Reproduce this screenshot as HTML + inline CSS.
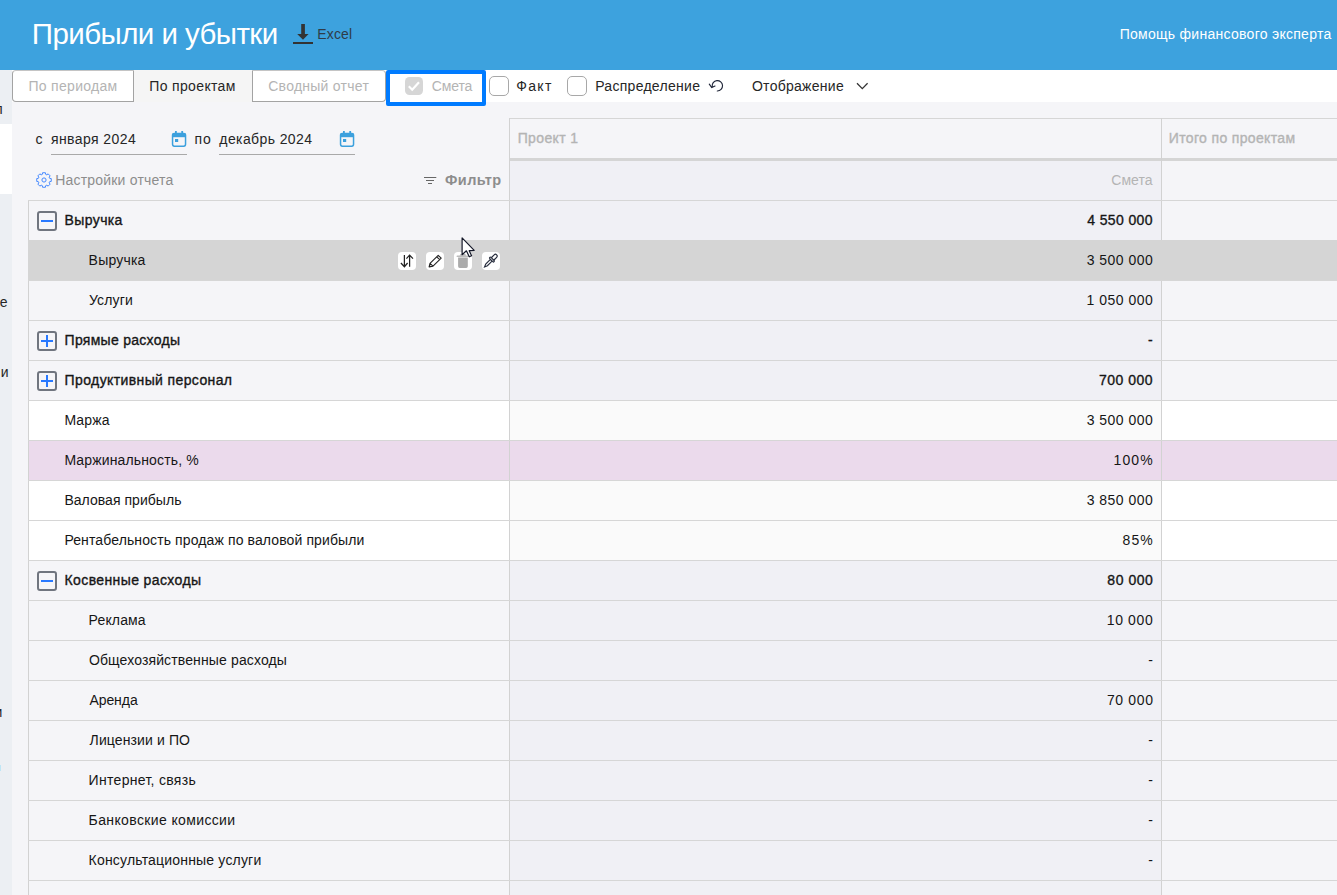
<!DOCTYPE html>
<html lang="ru">
<head>
<meta charset="utf-8">
<title>Прибыли и убытки</title>
<style>
*{box-sizing:border-box;margin:0;padding:0}
html,body{width:1337px;height:895px;overflow:hidden;background:#f5f5f8;font-family:"Liberation Sans",sans-serif;color:#161616;font-size:14px}
.abs,.tx,.row{position:absolute}
.tx{font-size:14px;line-height:18px;white-space:nowrap}
#hdr{left:0;top:0;width:1337px;height:70px;background:#3da2de}
#side{left:0;top:70px;width:12px;height:825px;background:#eceff3}
#sidew{left:0;top:124px;width:12px;height:70px;background:#fff}
.sf{position:absolute;font-size:14px;line-height:18px;color:#262626;white-space:nowrap}
#bar{left:12px;top:70px;width:1325px;height:32px;background:#fff}
.tab{top:70px;height:32px;background:#fff;border:1px solid #a3a3a3;border-top-color:#c4c4c4}
.cb{width:20px;height:20px;border:1px solid #a8a8a8;border-radius:5px;background:#fff}
.vline{width:1px;background:#d2d2d2}
.hline{height:1px;background:#d6d6d6}
.row{left:28px;width:1309px;height:40px}
.row .l{position:absolute;left:0;top:0;width:481px;height:40px;border-left:1px solid #d2d2d2}
.row .p{position:absolute;left:482px;top:0;width:651px;height:40px;background:#f0f0f5}
.row .t{position:absolute;left:1134px;top:0;width:175px;height:40px}
.row .v1{position:absolute;left:481px;top:0;width:1px;height:40px;background:#d2d2d2}
.row .v2{position:absolute;left:1133px;top:0;width:1px;height:40px;background:#d2d2d2}
.row .b{position:absolute;left:0;top:0;width:1309px;height:1px;background:#d6d6d6}
.row.s .l,.row.s .t{background:#fff}
.row.s .p{background:#fafafa}
.row.pk .l,.row.pk .t,.row.pk .p{background:#ebdaec}
.row.hv .l,.row.hv .t,.row.hv .p{background:#d5d5d5}
.row.hv .l{border-left-color:#d5d5d5}
.row.hv .v1,.row.hv .v2,.row.hv .b{background:#d5d5d5}
.box{position:absolute;left:9px;top:11px;width:20px;height:20px;border:2px solid #70757f;border-radius:3px;background:#f5f5f8}
.box i{position:absolute;left:2px;top:7px;width:12px;height:2px;background:#2979ff}
.box b{position:absolute;left:7px;top:2px;width:2px;height:12px;background:#2979ff}
.ic{position:absolute;top:252px;width:18px;height:18px;border-radius:4px;background:#fff}
</style>
</head>
<body>
<div id="hdr" class="abs"></div>
<svg class="abs" style="left:292px;top:23px" width="22" height="22" viewBox="0 0 22 22"><path d="M9.200 1h3.700v10h3.700L11 16.800 5.200 11h4z" fill="#333"/><rect x="1" y="19" width="20" height="2" fill="#333"/></svg>

<div id="side" class="abs"></div>
<div id="sidew" class="abs"></div>
<div class="abs" style="left:0;top:70px;width:12px;height:825px;overflow:hidden">
<div class="sf" style="left:-5.500px;top:30px">л</div>
<div class="sf" style="left:-0.300px;top:223px">е</div>
<div class="sf" style="left:0.800px;top:293px">и</div>
<div class="sf" style="left:-5.500px;top:633px">и</div>
<div class="abs" style="left:0;top:695px;width:1px;height:6px;background:#bfe6f5"></div>
</div>
<div id="bar" class="abs"></div>
<div class="tab abs" style="left:12px;width:122px;border-radius:4px 0 0 4px"></div>
<div class="tab abs" style="left:134px;width:118px;background:#f5f5f5;border-color:#f5f5f5"></div>
<div class="tab abs" style="left:252px;width:134px;border-radius:0 4px 4px 0"></div>

<div class="abs" style="left:386px;top:70px;width:100px;height:36px;border:4px solid #007bff;border-radius:2px;background:#fff"></div>
<div class="abs" style="left:404.500px;top:76.500px;width:18.500px;height:18.500px;border-radius:4.500px;background:#d6d6d6"></div>
<svg class="abs" style="left:404px;top:76px" width="20" height="20" viewBox="0 0 20 20"><path d="M4.800 10.300l3.400 3.400L15 6.200" fill="none" stroke="#fff" stroke-width="2.200"/></svg>
<div class="abs cb" style="left:489px;top:76px"></div>
<div class="abs cb" style="left:567px;top:76px"></div>
<svg class="abs" style="left:707px;top:77px" width="18" height="18" viewBox="0 0 18 18"><path d="M5.200 9.600A5.200 5.200 0 1 1 10.300 14M2.300 7.200L4.700 10.600 8 9" fill="none" stroke="#1f2538" stroke-width="1.150" stroke-linecap="round"/></svg>
<svg class="abs" style="left:855px;top:80px" width="14" height="12" viewBox="0 0 14 12"><path d="M2 3.300l5.300 5.300 5.300-5.300" fill="none" stroke="#333" stroke-width="1.300"/></svg>

<!-- date row -->
<div class="abs" style="left:51px;top:154px;width:136px;height:1px;background:#a9a9a9"></div>
<svg class="abs" style="left:171px;top:130px" width="16" height="18" viewBox="0 0 16 18"><path d="M4.900 1v2.500M11.200 1v2.500" stroke="#3ca0dd" stroke-width="1.800"/><rect x="1.550" y="3.550" width="13" height="12.600" rx="1.800" fill="none" stroke="#3ca0dd" stroke-width="1.500"/><rect x="1.500" y="3.300" width="13.100" height="3.900" fill="#3ca0dd"/><rect x="4" y="9" width="3.200" height="3" fill="#3ca0dd"/></svg>
<div class="abs" style="left:219px;top:154px;width:136px;height:1px;background:#a9a9a9"></div>
<svg class="abs" style="left:339px;top:130px" width="16" height="18" viewBox="0 0 16 18"><path d="M4.900 1v2.500M11.200 1v2.500" stroke="#3ca0dd" stroke-width="1.800"/><rect x="1.550" y="3.550" width="13" height="12.600" rx="1.800" fill="none" stroke="#3ca0dd" stroke-width="1.500"/><rect x="1.500" y="3.300" width="13.100" height="3.900" fill="#3ca0dd"/><rect x="4" y="9" width="3.200" height="3" fill="#3ca0dd"/></svg>

<!-- settings / filter -->
<svg class="abs" style="left:35.500px;top:171.500px" width="16" height="16" viewBox="0 0 16 16"><path d="M6.35 2.33 L6.56 0.74 L9.44 0.74 L9.65 2.33 L10.84 2.83 L12.11 1.85 L14.15 3.89 L13.17 5.16 L13.67 6.35 L15.26 6.56 L15.26 9.44 L13.67 9.65 L13.17 10.84 L14.15 12.11 L12.11 14.15 L10.84 13.17 L9.65 13.67 L9.44 15.26 L6.56 15.26 L6.35 13.67 L5.16 13.17 L3.89 14.15 L1.85 12.11 L2.83 10.84 L2.33 9.65 L0.74 9.44 L0.74 6.56 L2.33 6.35 L2.83 5.16 L1.85 3.89 L3.89 1.85 L5.16 2.83Z" fill="none" stroke="#4589ff" stroke-width="1" stroke-linejoin="round"/><circle cx="8" cy="8" r="2.100" fill="none" stroke="#4589ff" stroke-width="1"/></svg>
<svg class="abs" style="left:423px;top:175px" width="14" height="12" viewBox="0 0 14 12"><path d="M1 2.500h12.300M3 5.500h8M5 8.500h4" stroke="#666" stroke-width="1"/></svg>

<!-- table header -->
<div class="abs" style="left:510px;top:119px;width:651px;height:39px;background:#f5f5f8"></div>
<div class="abs" style="left:510px;top:160px;width:651px;height:40px;background:#f0f0f5"></div>
<div class="abs hline" style="left:509px;top:118px;width:828px"></div>
<div class="abs" style="left:509px;top:158px;width:828px;height:3px;background:#d5d5d5"></div>
<div class="abs vline" style="left:509px;top:118px;height:82px"></div>
<div class="abs vline" style="left:1161px;top:118px;height:82px"></div>

<!-- rows -->
<div class="row g" style="top:200px"><div class="l"></div><div class="p"></div><div class="t"></div><div class="v1"></div><div class="v2"></div><div class="b"></div><div class="box"><i></i></div></div>
<div class="row hv" style="top:240px"><div class="l"></div><div class="p"></div><div class="t"></div><div class="v1"></div><div class="v2"></div><div class="b"></div></div>
<div class="row c" style="top:280px"><div class="l"></div><div class="p"></div><div class="t"></div><div class="v1"></div><div class="v2"></div><div class="b"></div></div>
<div class="row g" style="top:320px"><div class="l"></div><div class="p"></div><div class="t"></div><div class="v1"></div><div class="v2"></div><div class="b"></div><div class="box"><i></i><b></b></div></div>
<div class="row g" style="top:360px"><div class="l"></div><div class="p"></div><div class="t"></div><div class="v1"></div><div class="v2"></div><div class="b"></div><div class="box"><i></i><b></b></div></div>
<div class="row s" style="top:400px"><div class="l"></div><div class="p"></div><div class="t"></div><div class="v1"></div><div class="v2"></div><div class="b"></div></div>
<div class="row pk" style="top:440px"><div class="l"></div><div class="p"></div><div class="t"></div><div class="v1"></div><div class="v2"></div><div class="b"></div></div>
<div class="row s" style="top:480px"><div class="l"></div><div class="p"></div><div class="t"></div><div class="v1"></div><div class="v2"></div><div class="b"></div></div>
<div class="row s" style="top:520px"><div class="l"></div><div class="p"></div><div class="t"></div><div class="v1"></div><div class="v2"></div><div class="b"></div></div>
<div class="row g" style="top:560px"><div class="l"></div><div class="p"></div><div class="t"></div><div class="v1"></div><div class="v2"></div><div class="b"></div><div class="box"><i></i></div></div>
<div class="row c" style="top:600px"><div class="l"></div><div class="p"></div><div class="t"></div><div class="v1"></div><div class="v2"></div><div class="b"></div></div>
<div class="row c" style="top:640px"><div class="l"></div><div class="p"></div><div class="t"></div><div class="v1"></div><div class="v2"></div><div class="b"></div></div>
<div class="row c" style="top:680px"><div class="l"></div><div class="p"></div><div class="t"></div><div class="v1"></div><div class="v2"></div><div class="b"></div></div>
<div class="row c" style="top:720px"><div class="l"></div><div class="p"></div><div class="t"></div><div class="v1"></div><div class="v2"></div><div class="b"></div></div>
<div class="row c" style="top:760px"><div class="l"></div><div class="p"></div><div class="t"></div><div class="v1"></div><div class="v2"></div><div class="b"></div></div>
<div class="row c" style="top:800px"><div class="l"></div><div class="p"></div><div class="t"></div><div class="v1"></div><div class="v2"></div><div class="b"></div></div>
<div class="row c" style="top:840px"><div class="l"></div><div class="p"></div><div class="t"></div><div class="v1"></div><div class="v2"></div><div class="b"></div></div>
<div class="row c" style="top:880px"><div class="l"></div><div class="p"></div><div class="t"></div><div class="v1"></div><div class="v2"></div><div class="b"></div></div>
<div class="ic" style="left:398px"></div><div class="ic" style="left:426px"></div><div class="ic" style="left:454px"></div><div class="ic" style="left:482px"></div>
<svg class="abs" style="left:398px;top:252px" width="18" height="18" viewBox="0 0 18 18"><path d="M6.400 3v11.600M2.900 11l3.500 3.700L9.600 11M11.600 14.700V3.200M8.400 6.600l3.200-3.500 3.400 3.500" fill="none" stroke="#222" stroke-width="1.250"/></svg>
<svg class="abs" style="left:426px;top:252px" width="18" height="18" viewBox="0 0 18 18"><path d="M3.100 15l.9-3.600L12.200 3.300l3 2.800L7 14.100zM10.700 4.800l3 2.900M4 11.400L7 14.100" fill="none" stroke="#222" stroke-width="1.100" stroke-linejoin="round"/><path d="M3.100 15l.5-2 1.500 1.500z" fill="#222"/></svg>
<svg class="abs" style="left:454px;top:252px" width="18" height="18" viewBox="0 0 18 18"><path d="M4.100 5.600h9.700v8.700a1.600 1.600 0 0 1-1.600 1.600H5.700a1.600 1.600 0 0 1-1.600-1.600z" fill="#ababab"/><path d="M5.600 3.700L6.500 1.900h4.800l.9 1.800z" fill="#b4b4b4"/><rect x="2.600" y="3.600" width="12.400" height="1.400" rx="0.600" fill="#bcbcbc"/></svg>
<svg class="abs" style="left:482px;top:252px" width="18" height="18" viewBox="0 0 18 18"><g transform="translate(8.600 8.900) rotate(45) scale(0.92)" fill="#fff" stroke="#262c3c" stroke-width="1.250"><path d="M-1.300 -1v7.200L0 9.300l1.300-3.100V-1z"/><rect x="-1.900" y="-9.300" width="3.800" height="7.500" rx="1.900"/><rect x="-3.300" y="-3" width="6.600" height="1.900" rx="0.950"/></g></svg>
<svg class="abs" style="left:460px;top:236px" width="16" height="23" viewBox="0 0 16 23"><path d="M2.100 1.900V18.700L6.400 14.800L9.300 20.800L11.600 19.700L9.200 14.700L14.200 14.300Z" fill="#fff" stroke="#141828" stroke-width="1.200" stroke-linejoin="round"/></svg>
<div class="tx" id="title" style="left:31.87px;top:15.5px;letter-spacing:-0.567px;font-size:29.500px;line-height:36px;color:#fff;">Прибыли и убытки</div>
<div class="tx" id="excel" style="left:317.32px;top:25px;letter-spacing:0.135px;color:#2f3c48;">Excel</div>
<div class="tx" id="help" style="left:1119.63px;top:25px;letter-spacing:0.280px;color:#fff;">Помощь финансового эксперта</div>
<div class="tx" id="tab1" style="left:28.48px;top:77px;letter-spacing:0.295px;color:#b4b4b4;">По периодам</div>
<div class="tx" id="tab2" style="left:149.25px;top:77px;letter-spacing:0.351px;color:#262626;">По проектам</div>
<div class="tx" id="tab3" style="left:268.24px;top:77px;letter-spacing:0.259px;color:#b4b4b4;">Сводный отчет</div>
<div class="tx" id="cbl1" style="left:431.80px;top:77px;letter-spacing:-0.133px;color:#b4b4b4;">Смета</div>
<div class="tx" id="cbl2" style="left:516.32px;top:77px;letter-spacing:1.311px;color:#262626;">Факт</div>
<div class="tx" id="cbl3" style="left:595.15px;top:77px;letter-spacing:0.294px;color:#262626;">Распределение</div>
<div class="tx" id="disp" style="left:751.93px;top:77px;letter-spacing:0.280px;color:#262626;">Отображение</div>
<div class="tx" id="d_s" style="left:35.55px;top:130px;letter-spacing:0.000px;color:#262626;">с</div>
<div class="tx" id="d_from" style="left:50.95px;top:130px;letter-spacing:0.415px;color:#262626;">января 2024</div>
<div class="tx" id="d_po" style="left:194.46px;top:130px;letter-spacing:1.073px;color:#262626;">по</div>
<div class="tx" id="d_to" style="left:219.35px;top:130px;letter-spacing:0.390px;color:#262626;">декабрь 2024</div>
<div class="tx" id="sett" style="left:55.14px;top:171px;letter-spacing:0.207px;color:#8d8d8d;">Настройки отчета</div>
<div class="tx" id="filt" style="left:445.02px;top:171px;letter-spacing:0.417px;color:#8d8d8d;font-weight:bold;font-size:14.500px;">Фильтр</div>
<div class="tx" id="h_p1" style="left:517.69px;top:129px;letter-spacing:0.365px;color:#b4b4b4;-webkit-text-stroke:0.35px currentColor;">Проект 1</div>
<div class="tx" id="h_tot" style="left:1168.82px;top:129px;letter-spacing:0.344px;color:#b4b4b4;-webkit-text-stroke:0.35px currentColor;">Итого по проектам</div>
<div class="tx" id="h_sm" style="left:1111.24px;top:171px;letter-spacing:0.037px;color:#b4b4b4;">Смета</div>
<div class="tx" id="n0" style="left:64.62px;top:211px;letter-spacing:0.374px;color:#161616;-webkit-text-stroke:0.35px currentColor;">Выручка</div>
<div class="tx" id="v0" style="right:184.04px;top:211px;letter-spacing:0.386px;color:#161616;-webkit-text-stroke:0.35px currentColor;">4 550 000</div>
<div class="tx" id="n1" style="left:88.62px;top:251px;letter-spacing:0.204px;color:#161616;">Выручка</div>
<div class="tx" id="v1" style="right:183.67px;top:251px;letter-spacing:0.489px;color:#161616;">3 500 000</div>
<div class="tx" id="n2" style="left:89.01px;top:291px;letter-spacing:0.133px;color:#161616;">Услуги</div>
<div class="tx" id="v2" style="right:183.67px;top:291px;letter-spacing:0.505px;color:#161616;">1 050 000</div>
<div class="tx" id="n3" style="left:64.62px;top:331px;letter-spacing:0.279px;color:#161616;-webkit-text-stroke:0.35px currentColor;">Прямые расходы</div>
<div class="tx" id="v3" style="right:184.27px;top:331px;letter-spacing:0.000px;color:#161616;-webkit-text-stroke:0.35px currentColor;">-</div>
<div class="tx" id="n4" style="left:64.62px;top:371px;letter-spacing:0.384px;color:#161616;-webkit-text-stroke:0.35px currentColor;">Продуктивный персонал</div>
<div class="tx" id="v4" style="right:183.83px;top:371px;letter-spacing:0.520px;color:#161616;-webkit-text-stroke:0.35px currentColor;">700 000</div>
<div class="tx" id="n5" style="left:64.39px;top:411px;letter-spacing:0.143px;color:#161616;">Маржа</div>
<div class="tx" id="v5" style="right:183.67px;top:411px;letter-spacing:0.489px;color:#161616;">3 500 000</div>
<div class="tx" id="n6" style="left:64.39px;top:451px;letter-spacing:0.143px;color:#161616;">Маржинальность, %</div>
<div class="tx" id="v6" style="right:183.06px;top:451px;letter-spacing:1.183px;color:#161616;">100%</div>
<div class="tx" id="n7" style="left:64.39px;top:491px;letter-spacing:0.039px;color:#161616;">Валовая прибыль</div>
<div class="tx" id="v7" style="right:183.67px;top:491px;letter-spacing:0.489px;color:#161616;">3 850 000</div>
<div class="tx" id="n8" style="left:64.39px;top:531px;letter-spacing:0.113px;color:#161616;">Рентабельность продаж по валовой прибыли</div>
<div class="tx" id="v8" style="right:183.03px;top:531px;letter-spacing:1.183px;color:#161616;">85%</div>
<div class="tx" id="n9" style="left:64.59px;top:571px;letter-spacing:0.382px;color:#161616;-webkit-text-stroke:0.35px currentColor;">Косвенные расходы</div>
<div class="tx" id="v9" style="right:183.67px;top:571px;letter-spacing:0.534px;color:#161616;-webkit-text-stroke:0.35px currentColor;">80 000</div>
<div class="tx" id="n10" style="left:88.62px;top:611px;letter-spacing:0.141px;color:#161616;">Реклама</div>
<div class="tx" id="v10" style="right:183.55px;top:611px;letter-spacing:0.657px;color:#161616;">10 000</div>
<div class="tx" id="n11" style="left:88.90px;top:651px;letter-spacing:0.131px;color:#161616;">Общехозяйственные расходы</div>
<div class="tx" id="v11" style="right:184.05px;top:651px;letter-spacing:0.000px;color:#161616;">-</div>
<div class="tx" id="n12" style="left:89.38px;top:691px;letter-spacing:-0.061px;color:#161616;">Аренда</div>
<div class="tx" id="v12" style="right:183.38px;top:691px;letter-spacing:0.648px;color:#161616;">70 000</div>
<div class="tx" id="n13" style="left:89.60px;top:731px;letter-spacing:0.117px;color:#161616;">Лицензии и ПО</div>
<div class="tx" id="v13" style="right:184.05px;top:731px;letter-spacing:0.000px;color:#161616;">-</div>
<div class="tx" id="n14" style="left:88.62px;top:771px;letter-spacing:0.300px;color:#161616;">Интернет, связь</div>
<div class="tx" id="v14" style="right:184.05px;top:771px;letter-spacing:0.000px;color:#161616;">-</div>
<div class="tx" id="n15" style="left:88.62px;top:811px;letter-spacing:0.372px;color:#161616;">Банковские комиссии</div>
<div class="tx" id="v15" style="right:184.05px;top:811px;letter-spacing:0.000px;color:#161616;">-</div>
<div class="tx" id="n16" style="left:88.62px;top:851px;letter-spacing:0.185px;color:#161616;">Консультационные услуги</div>
<div class="tx" id="v16" style="right:184.05px;top:851px;letter-spacing:0.000px;color:#161616;">-</div>
</body>
</html>
